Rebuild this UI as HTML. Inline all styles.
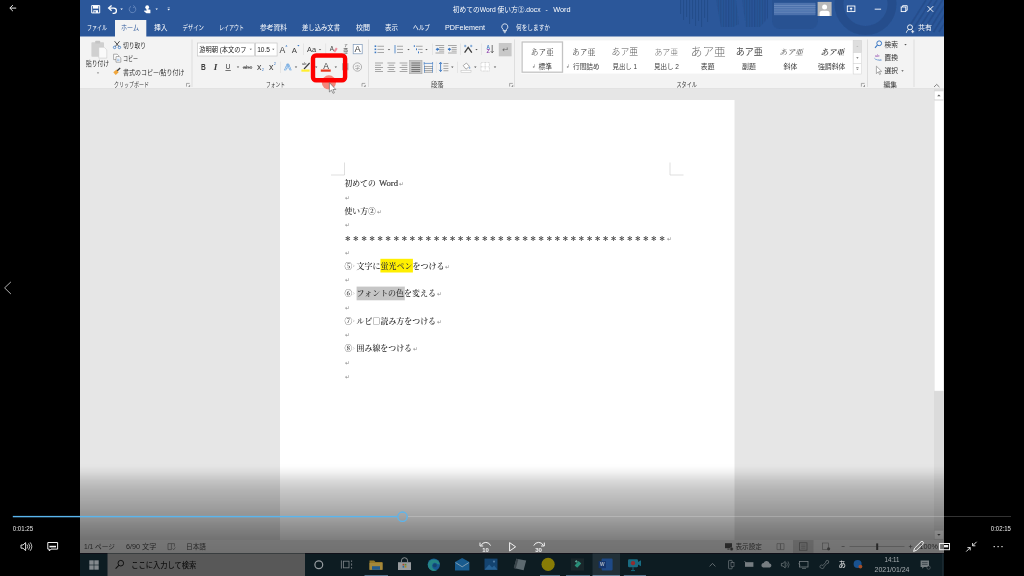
<!DOCTYPE html>
<html lang="ja">
<head>
<meta charset="utf-8">
<title>初めてのWord 使い方②.docx - Word</title>
<style>
html,body{margin:0;padding:0;background:#000;width:1024px;height:576px;overflow:hidden}
svg{display:block;position:absolute;left:0;top:0}
text{font-family:"Liberation Sans", "Noto Sans CJK JP", sans-serif;white-space:pre}
</style>
</head>
<body>
<svg width="1024" height="576" viewBox="0 0 1024 576">
<defs>
<filter id="soft" x="80" y="0" width="864" height="576" filterUnits="userSpaceOnUse"><feGaussianBlur stdDeviation="0.35"/></filter>
<linearGradient id="ov" x1="0" y1="0" x2="0" y2="1">
<stop offset="0.000" stop-color="#000" stop-opacity="0"/>
<stop offset="0.035" stop-color="#000" stop-opacity="0.005"/>
<stop offset="0.088" stop-color="#000" stop-opacity="0.05"/>
<stop offset="0.158" stop-color="#000" stop-opacity="0.14"/>
<stop offset="0.246" stop-color="#000" stop-opacity="0.22"/>
<stop offset="0.377" stop-color="#000" stop-opacity="0.3"/>
<stop offset="0.474" stop-color="#000" stop-opacity="0.36"/>
<stop offset="0.579" stop-color="#000" stop-opacity="0.44"/>
<stop offset="0.684" stop-color="#000" stop-opacity="0.51"/>
<stop offset="0.798" stop-color="#000" stop-opacity="0.53"/>
<stop offset="1.000" stop-color="#000" stop-opacity="0.58"/>
</linearGradient>
</defs>
<rect x="0" y="0" width="1024.00" height="576.00" fill="#000"/>
<rect x="80" y="0" width="864.00" height="37.00" fill="#2b579a"/>
<rect x="80" y="36.5" width="864.00" height="52.50" fill="#f3f3f3"/>
<rect x="80" y="88.2" width="864.00" height="0.80" fill="#dedede"/>
<rect x="80" y="89" width="864.00" height="451.00" fill="#e6e6e6"/>
<rect x="280" y="100" width="454.50" height="440.00" fill="#ffffff"/>
<rect x="934" y="89.2" width="10.00" height="450.80" fill="#dbdbdb"/>
<rect x="80" y="540" width="864.00" height="13.00" fill="#f1f1f1"/>
<rect x="80" y="553" width="864.00" height="23.00" fill="#101a22"/>
<g filter="url(#soft)">
<clipPath id="hdr"><rect x="80" y="0" width="864" height="36.5"/></clipPath>
<pattern id="vh" width="2.6" height="4" patternUnits="userSpaceOnUse"><rect x="0" y="0" width="1.3" height="4" fill="#234a86"/></pattern>
<g clip-path="url(#hdr)">
<rect x="680" y="0" width="1.2" height="14" fill="#234a86" opacity="0.75"/>
<rect x="683" y="0" width="1.2" height="20" fill="#234a86" opacity="0.75"/>
<rect x="686" y="0" width="1.2" height="17" fill="#234a86" opacity="0.75"/>
<rect x="689" y="0" width="1.2" height="24" fill="#234a86" opacity="0.75"/>
<rect x="692" y="0" width="1.2" height="19" fill="#234a86" opacity="0.75"/>
<rect x="695" y="0" width="1.2" height="26" fill="#234a86" opacity="0.75"/>
<rect x="698" y="0" width="1.2" height="21" fill="#234a86" opacity="0.75"/>
<rect x="701" y="0" width="1.2" height="27" fill="#234a86" opacity="0.75"/>
<rect x="704" y="0" width="1.2" height="18" fill="#234a86" opacity="0.75"/>
<rect x="707" y="0" width="1.2" height="22" fill="#234a86" opacity="0.75"/>
<path d="M716 0h20l3 24l-6 3h-12z" fill="url(#vh)" opacity="0.8"/>
<path d="M742 0h26v18l-8 9h-14z" fill="url(#vh)" opacity="0.8"/>
<path d="M772 0h46v21a8 8 0 0 1 -8 8h-30a8 8 0 0 1 -8 -8z" fill="#234a86" opacity="0.4"/>
<circle cx="865.5" cy="4" r="26.5" fill="none" stroke="#234a86" stroke-width="9" opacity="0.7"/>
<g stroke="#234a86" stroke-width="1.6" opacity="0.7">
<line x1="906.0" y1="32" x2="926.0" y2="0"/>
<line x1="911.5" y1="32" x2="931.5" y2="0"/>
<line x1="917.0" y1="32" x2="937.0" y2="0"/>
<line x1="922.5" y1="32" x2="942.5" y2="0"/>
<line x1="928.0" y1="32" x2="948.0" y2="0"/>
<line x1="933.5" y1="32" x2="953.5" y2="0"/>
<line x1="939.0" y1="32" x2="959.0" y2="0"/>
</g></g>
<path d="M91.7 5.6h8v7.3h-8z" fill="none" stroke="#ffffff" stroke-width="1"/><rect x="93" y="5.6" width="5.4" height="3" fill="#ffffff"/><rect x="93.4" y="10.2" width="4.6" height="2.7" fill="#ffffff"/>
<rect x="94.4" y="10.9" width="1.2" height="1.6" fill="#2b579a"/>
<path d="M109.2 8.1h4.6a2.6 2.6 0 0 1 0 5.2h-1.2" fill="none" stroke="#ffffff" stroke-width="1.3"/>
<path d="M111.6 5.4l-3 2.7l3 2.7" fill="none" stroke="#ffffff" stroke-width="1.3"/>
<path d="M120.3 8.4h2.6l-1.3 1.6z" fill="#ffffff"/>
<path d="M134.6 6.8a3.3 3.3 0 1 1 -3.6 -0.4" fill="none" stroke="#6a8bc0" stroke-width="0.9"/>
<path d="M133.3 5.2l1.6 1.6l-2 0.9" fill="none" stroke="#6a8bc0" stroke-width="0.8"/>
<circle cx="147.2" cy="7.2" r="1.9" fill="#ffffff"/>
<path d="M146.4 7v4l-1.6 -0.8l-0.8 1l2.4 2h4v-3.4l-2.6 -0.6v-2.2z" fill="#ffffff"/>
<path d="M155.5 8.5h2.4l-1.2 1.5z" fill="#ffffff"/>
<rect x="167.6" y="7.6" width="2.2" height="0.6" fill="#ffffff"/><path d="M167.5 9h2.4l-1.2 1.5z" fill="#ffffff"/>
<rect x="774" y="2.8" width="41.5" height="12.4" fill="#5a7db5" opacity="0.75"/>
<rect x="774" y="5.2" width="41.5" height="0.7" fill="#8aa5cf" opacity="0.6"/>
<rect x="774" y="7.4" width="41.5" height="0.7" fill="#8aa5cf" opacity="0.6"/>
<rect x="774" y="9.6" width="41.5" height="0.7" fill="#8aa5cf" opacity="0.6"/>
<rect x="774" y="11.8" width="41.5" height="0.7" fill="#8aa5cf" opacity="0.6"/>
<rect x="817.6" y="1.9" width="14" height="14.1" fill="#b9b9b9"/>
<circle cx="824.6" cy="6.9" r="2.5" fill="#fff"/><path d="M819.6 16v-2.6a2.6 2.6 0 0 1 2.6 -2.6h4.8a2.6 2.6 0 0 1 2.6 2.6v2.6z" fill="#fff"/>
<rect x="847.3" y="6" width="7.6" height="5.6" fill="none" stroke="#ffffff" stroke-width="0.9"/>
<path d="M851.1 7.2l1.6 1.7h-1.1v1.6h-1v-1.6h-1.1z" fill="#ffffff"/>
<rect x="874.7" y="8.7" width="6.4" height="0.9" fill="#ffffff"/>
<rect x="901.2" y="7" width="4.6" height="4.6" fill="none" stroke="#ffffff" stroke-width="0.9"/>
<path d="M902.6 7v-1.3h4.6v4.6h-1.4" fill="none" stroke="#ffffff" stroke-width="0.9"/>
<path d="M927.6 6.2l5.6 5.6M933.2 6.2l-5.6 5.6" stroke="#ffffff" stroke-width="1"/>
<circle cx="910" cy="27.3" r="2.5" fill="none" stroke="#ffffff" stroke-width="0.9"/>
<path d="M906.3 32.8a3.8 3.8 0 0 1 2.6 -3.4M911.3 29.5a3.6 3.6 0 0 1 1.6 1.2M912.7 30.2v3M911.2 31.7h3" fill="none" stroke="#ffffff" stroke-width="0.8"/>
<path d="M504.8 23.8a3 3 0 0 1 1.7 5.5v1.3h-3.4v-1.3a3 3 0 0 1 1.7 -5.5z" fill="none" stroke="#ffffff" stroke-width="0.8"/>
<path d="M503.5 31.6h2.6M503.9 32.7h1.8" stroke="#ffffff" stroke-width="0.7"/>
<text x="452.80" y="12.08" font-size="6.9" fill="#ffffff" textLength="87.80" lengthAdjust="spacingAndGlyphs">初めてのWord 使い方②.docx</text>
<text x="545.40" y="12.08" font-size="6.9" fill="#ffffff" textLength="2.20" lengthAdjust="spacingAndGlyphs">-</text>
<text x="553.20" y="12.08" font-size="6.9" fill="#ffffff" textLength="17.40" lengthAdjust="spacingAndGlyphs">Word</text>
<rect x="115" y="20" width="31.30" height="17.00" fill="#f3f3f3"/>
<text x="87.00" y="30.38" font-size="6.9" fill="#ffffff" textLength="20.00" lengthAdjust="spacingAndGlyphs">ファイル</text>
<text x="154.00" y="30.38" font-size="6.9" fill="#ffffff" textLength="13.50" lengthAdjust="spacingAndGlyphs">挿入</text>
<text x="182.50" y="30.38" font-size="6.9" fill="#ffffff" textLength="21.50" lengthAdjust="spacingAndGlyphs">デザイン</text>
<text x="219.00" y="30.38" font-size="6.9" fill="#ffffff" textLength="25.00" lengthAdjust="spacingAndGlyphs">レイアウト</text>
<text x="260.00" y="30.38" font-size="6.9" fill="#ffffff" textLength="27.00" lengthAdjust="spacingAndGlyphs">参考資料</text>
<text x="302.00" y="30.38" font-size="6.9" fill="#ffffff" textLength="38.00" lengthAdjust="spacingAndGlyphs">差し込み文書</text>
<text x="356.00" y="30.38" font-size="6.9" fill="#ffffff" textLength="14.00" lengthAdjust="spacingAndGlyphs">校閲</text>
<text x="385.00" y="30.38" font-size="6.9" fill="#ffffff" textLength="13.00" lengthAdjust="spacingAndGlyphs">表示</text>
<text x="413.00" y="30.38" font-size="6.9" fill="#ffffff" textLength="17.00" lengthAdjust="spacingAndGlyphs">ヘルプ</text>
<text x="445.00" y="30.38" font-size="6.9" fill="#ffffff" textLength="40.00" lengthAdjust="spacingAndGlyphs">PDFelement</text>
<text x="516.00" y="30.38" font-size="6.9" fill="#ffffff" textLength="34.00" lengthAdjust="spacingAndGlyphs">何をしますか</text>
<text x="121.00" y="30.38" font-size="6.9" fill="#2b579a" textLength="18.00" lengthAdjust="spacingAndGlyphs">ホーム</text>
<text x="918.00" y="30.38" font-size="6.9" fill="#ffffff" textLength="14.00" lengthAdjust="spacingAndGlyphs">共有</text>
<text x="114.00" y="87.41" font-size="6.7" fill="#3c3c3c" textLength="35.00" lengthAdjust="spacingAndGlyphs">クリップボード</text>
<text x="266.00" y="87.41" font-size="6.7" fill="#3c3c3c" textLength="19.00" lengthAdjust="spacingAndGlyphs">フォント</text>
<text x="431.00" y="87.41" font-size="6.7" fill="#3c3c3c" textLength="12.50" lengthAdjust="spacingAndGlyphs">段落</text>
<text x="676.50" y="87.41" font-size="6.7" fill="#3c3c3c" textLength="20.50" lengthAdjust="spacingAndGlyphs">スタイル</text>
<text x="883.50" y="87.41" font-size="6.7" fill="#3c3c3c" textLength="13.50" lengthAdjust="spacingAndGlyphs">編集</text>
<rect x="191.6" y="39.5" width="0.80" height="47.50" fill="#d8d8d8"/>
<rect x="368.1" y="39.5" width="0.80" height="47.50" fill="#d8d8d8"/>
<rect x="514.1" y="39.5" width="0.80" height="47.50" fill="#d8d8d8"/>
<rect x="867.1" y="39.5" width="0.80" height="47.50" fill="#d8d8d8"/>
<rect x="913.6" y="39.5" width="0.80" height="47.50" fill="#d8d8d8"/>
<text x="86.00" y="66.45" font-size="6.8" fill="#2e2e2e" textLength="23.00" lengthAdjust="spacingAndGlyphs">貼り付け</text>
<text x="123.00" y="47.75" font-size="6.8" fill="#2e2e2e" textLength="23.00" lengthAdjust="spacingAndGlyphs">切り取り</text>
<text x="123.00" y="61.45" font-size="6.8" fill="#2e2e2e" textLength="15.00" lengthAdjust="spacingAndGlyphs">コピー</text>
<text x="123.00" y="74.65" font-size="6.8" fill="#2e2e2e" textLength="61.50" lengthAdjust="spacingAndGlyphs">書式のコピー/貼り付け</text>
<rect x="197.5" y="43" width="57" height="13" fill="#fff" stroke="#c6c6c6" stroke-width="0.7"/>
<rect x="255.6" y="43" width="21.5" height="13" fill="#fff" stroke="#c6c6c6" stroke-width="0.7"/>
<text x="199.30" y="52.08" font-size="6.9" fill="#222" textLength="47.30" lengthAdjust="spacingAndGlyphs">游明朝 (本文のフ</text>
<text x="257.20" y="52.08" font-size="6.9" fill="#222" textLength="12.80" lengthAdjust="spacingAndGlyphs">10.5</text>
<rect x="91.4" y="42.2" width="12.6" height="14.6" rx="0.8" fill="#d0d0d0"/>
<rect x="95.2" y="40.8" width="5" height="2.6" rx="0.6" fill="#c4c4c4"/>
<path d="M98.8 47.3h5.4l2.6 2.6v8.2h-8z" fill="#fafafa" stroke="#c9c9c9" stroke-width="0.6"/>
<path d="M96.90 72.55h2.2l-1.10 1.3z" fill="#666"/>
<path d="M114.6 41.2l4.4 5.4M119.6 41.2l-4.4 5.4" stroke="#3c3c3c" stroke-width="0.9" fill="none"/>
<circle cx="114.6" cy="47.4" r="1.25" fill="none" stroke="#3b78c4" stroke-width="0.8"/><circle cx="119.4" cy="47.4" r="1.25" fill="none" stroke="#3b78c4" stroke-width="0.8"/>
<path d="M113.6 54.2h3.6l1.4 1.4v4h-5z" fill="#fff" stroke="#777" stroke-width="0.6"/>
<path d="M116 56.6h3.4l1.4 1.4v4.2h-4.8z" fill="#fff" stroke="#777" stroke-width="0.6"/>
<path d="M117 59.2h2.6M117 60.6h2.6" stroke="#3b78c4" stroke-width="0.45"/>
<path d="M113.3 72.2l3.2 -2.6l2.2 2.6l-3 2.8z" fill="#f0a63c"/>
<path d="M117.2 70.8l3 -2.8" stroke="#3c3c3c" stroke-width="1.3"/>
<path d="M249.65 48.65h2.3l-1.15 1.3z" fill="#555"/>
<path d="M272.15 48.65h2.3l-1.15 1.3z" fill="#555"/>
<text x="279.40" y="52.51" font-size="9.2" fill="#3c3c3c" textLength="5.80" lengthAdjust="spacingAndGlyphs">A</text>
<path d="M285.3 46.6h2.2l-1.1 -1.5z" fill="#3b78c4"/>
<text x="291.80" y="52.81" font-size="7.8" fill="#3c3c3c" textLength="5.20" lengthAdjust="spacingAndGlyphs">A</text>
<path d="M297.3 45h2.2l-1.1 1.5z" fill="#3b78c4"/>
<rect x="303" y="43.5" width="0.60" height="11.50" fill="#dcdcdc"/>
<text x="307.00" y="52.28" font-size="8" fill="#3c3c3c" textLength="9.00" lengthAdjust="spacingAndGlyphs">Aa</text>
<path d="M318.80 48.90h2.4l-1.20 1.4z" fill="#555"/>
<rect x="325.5" y="43.5" width="0.60" height="11.50" fill="#dcdcdc"/>
<text x="329.80" y="50.58" font-size="6.6" fill="#3c3c3c" textLength="4.20" lengthAdjust="spacingAndGlyphs">A</text>
<path d="M333.4 51.2l2.6 -3.6l1.7 1.2l-2.6 3.6z" fill="#ee8f9d"/>
<text x="344.20" y="46.70" font-size="3.6" fill="#3c3c3c" textLength="3.40" lengthAdjust="spacingAndGlyphs">ア</text>
<text x="343.20" y="52.54" font-size="5.4" fill="#3c3c3c" textLength="4.80" lengthAdjust="spacingAndGlyphs">亜</text>
<rect x="353.2" y="44.4" width="9" height="9.4" fill="#fff" stroke="#7d98b8" stroke-width="0.7"/>
<text x="354.60" y="52.40" font-size="8.6" fill="#3c3c3c" textLength="6.20" lengthAdjust="spacingAndGlyphs">A</text>
<text x="201.00" y="69.82" font-size="8.4" fill="#3c3c3c" textLength="4.80" lengthAdjust="spacingAndGlyphs" font-weight="700">B</text>
<text x="213.80" y="69.82" font-size="8.4" fill="#3c3c3c" textLength="3.60" lengthAdjust="spacingAndGlyphs" style='font-family:"Liberation Serif", serif' font-style="italic" font-weight="700">I</text>
<text x="225.60" y="69.38" font-size="8" fill="#3c3c3c" textLength="5.00" lengthAdjust="spacingAndGlyphs">U</text>
<rect x="225.4" y="70.2" width="5.40" height="0.70" fill="#3c3c3c"/>
<path d="M236.80 66.50h2.4l-1.20 1.4z" fill="#555"/>
<text x="243.00" y="68.89" font-size="5.8" fill="#3c3c3c" textLength="9.00" lengthAdjust="spacingAndGlyphs">abc</text>
<rect x="242.6" y="67" width="9.80" height="0.50" fill="#3c3c3c"/>
<text x="257.00" y="69.55" font-size="8.2" fill="#3c3c3c" textLength="4.40" lengthAdjust="spacingAndGlyphs">x</text>
<text x="261.80" y="70.90" font-size="3.6" fill="#3b78c4" textLength="2.20" lengthAdjust="spacingAndGlyphs">2</text>
<text x="269.00" y="69.55" font-size="8.2" fill="#3c3c3c" textLength="4.40" lengthAdjust="spacingAndGlyphs">x</text>
<text x="273.80" y="64.90" font-size="3.6" fill="#3b78c4" textLength="2.20" lengthAdjust="spacingAndGlyphs">2</text>
<rect x="280.2" y="61.6" width="0.60" height="11.40" fill="#dcdcdc"/>
<text x="284.2" y="70" font-size="9" textLength="7.2" lengthAdjust="spacingAndGlyphs" fill="#f3f8fd" stroke="#5b9bdc" stroke-width="0.55" font-weight="700">A</text>
<path d="M294.80 66.50h2.4l-1.20 1.4z" fill="#555"/>
<text x="302.00" y="65.38" font-size="4.4" fill="#3c3c3c" textLength="4.40" lengthAdjust="spacingAndGlyphs">ab</text>
<path d="M304 69l5.6 -6" stroke="#3c3c3c" stroke-width="1.1"/>
<rect x="301.4" y="69.5" width="8.20" height="2.20" fill="#ffee2e"/>
<path d="M315.00 66.50h2.4l-1.20 1.4z" fill="#555"/>
<text x="323.20" y="68.72" font-size="8.4" fill="#3c3c3c" textLength="5.70" lengthAdjust="spacingAndGlyphs">A</text>
<rect x="320.8" y="69.5" width="9.90" height="2.20" fill="#e8361c"/>
<path d="M334.60 66.50h2.4l-1.20 1.4z" fill="#555"/>
<rect x="342" y="63.2" width="6.50" height="7.10" fill="#b5b5b5"/>
<text x="343.00" y="69.32" font-size="7" fill="#8a8a8a" textLength="4.60" lengthAdjust="spacingAndGlyphs">A</text>
<circle cx="357.4" cy="67" r="4.2" fill="none" stroke="#8a8a8a" stroke-width="0.6"/>
<text x="354.90" y="68.80" font-size="5" fill="#8a8a8a" textLength="5.00" lengthAdjust="spacingAndGlyphs">字</text>
<path d="M186.5 86.60000000000001v-3.2h3.2" fill="none" stroke="#777" stroke-width="0.6"/>
<path d="M188.1 86.80000000000001h2v-2z" fill="#777"/>
<path d="M362 86.60000000000001v-3.2h3.2" fill="none" stroke="#777" stroke-width="0.6"/>
<path d="M363.6 86.80000000000001h2v-2z" fill="#777"/>
<path d="M509.6 86.60000000000001v-3.2h3.2" fill="none" stroke="#777" stroke-width="0.6"/>
<path d="M511.20000000000005 86.80000000000001h2v-2z" fill="#777"/>
<path d="M861.4 86.60000000000001v-3.2h3.2" fill="none" stroke="#777" stroke-width="0.6"/>
<path d="M863.0 86.80000000000001h2v-2z" fill="#777"/>
<rect x="374.6" y="45.400000000000006" width="1.6" height="1.6" fill="#3b78c4"/>
<rect x="374.6" y="48.5" width="1.6" height="1.6" fill="#3b78c4"/>
<rect x="374.6" y="51.6" width="1.6" height="1.6" fill="#3b78c4"/>
<rect x="377.40" y="45.80" width="6.60" height="0.8" fill="#949494"/>
<rect x="377.40" y="48.90" width="6.60" height="0.8" fill="#949494"/>
<rect x="377.40" y="52.00" width="6.60" height="0.8" fill="#949494"/>
<path d="M387.80 48.90h2.4l-1.20 1.4z" fill="#555"/>
<rect x="394.6" y="45" width="0.8" height="8.4" fill="#3b78c4"/>
<rect x="397.00" y="45.80" width="6.00" height="0.8" fill="#949494"/>
<rect x="397.00" y="48.90" width="6.00" height="0.8" fill="#949494"/>
<rect x="397.00" y="52.00" width="6.00" height="0.8" fill="#949494"/>
<path d="M407.30 48.90h2.4l-1.20 1.4z" fill="#555"/>
<rect x="413.8" y="45.2" width="1" height="1.8" fill="#3b78c4"/><rect x="416" y="48.4" width="1" height="1.8" fill="#3b78c4"/><rect x="418" y="51.5" width="1" height="1.8" fill="#3b78c4"/>
<rect x="416.00" y="45.80" width="6.60" height="0.8" fill="#949494"/>
<rect x="418.20" y="48.90" width="4.40" height="0.8" fill="#949494"/>
<rect x="420.20" y="52.00" width="2.40" height="0.8" fill="#949494"/>
<path d="M425.30 48.90h2.4l-1.20 1.4z" fill="#555"/>
<rect x="432.1" y="43.5" width="0.60" height="11.50" fill="#dcdcdc"/>
<rect x="435.50" y="45.20" width="8.70" height="0.8" fill="#949494"/>
<rect x="435.50" y="52.60" width="8.70" height="0.8" fill="#949494"/>
<rect x="439.10" y="47.10" width="5.10" height="0.8" fill="#949494"/>
<rect x="439.10" y="48.90" width="5.10" height="0.8" fill="#949494"/>
<rect x="439.10" y="50.70" width="5.10" height="0.8" fill="#949494"/>
<rect x="448.00" y="45.20" width="8.70" height="0.8" fill="#949494"/>
<rect x="448.00" y="52.60" width="8.70" height="0.8" fill="#949494"/>
<rect x="451.60" y="47.10" width="5.10" height="0.8" fill="#949494"/>
<rect x="451.60" y="48.90" width="5.10" height="0.8" fill="#949494"/>
<rect x="451.60" y="50.70" width="5.10" height="0.8" fill="#949494"/>
<path d="M435.6 49.3l2.2 -1.9v1.2h1.3v1.4h-1.3v1.2z" fill="#3b78c4"/>
<path d="M451.2 49.3l-2.2 -1.9v1.2h-1.1v1.4h1.1v1.2z" fill="#3b78c4"/>
<rect x="460.1" y="43.5" width="0.60" height="11.50" fill="#dcdcdc"/>
<path d="M464.6 52.6l3.6 -5.2l3.6 5.2" fill="none" stroke="#3c3c3c" stroke-width="1.3"/>
<path d="M464 46h2.4M465.2 44.8v2.4M470 46h2.4M471.2 44.8v2.4" stroke="#3b78c4" stroke-width="0.6"/>
<path d="M475.30 48.90h2.4l-1.20 1.4z" fill="#555"/>
<rect x="481.2" y="43.5" width="0.60" height="11.50" fill="#dcdcdc"/>
<text x="486.40" y="48.53" font-size="4.8" fill="#3b78c4" textLength="3.40" lengthAdjust="spacingAndGlyphs" font-weight="700">A</text>
<text x="486.40" y="53.33" font-size="4.8" fill="#8e44ad" textLength="3.40" lengthAdjust="spacingAndGlyphs" font-weight="700">Z</text>
<path d="M492.2 45v7.6M490.8 51.2l1.4 1.6l1.4 -1.6" fill="none" stroke="#3c3c3c" stroke-width="0.7"/>
<rect x="498.8" y="43" width="12.80" height="13.30" fill="#c8c8c8"/>
<text x="501.60" y="52.12" font-size="7" fill="#666" textLength="7.20" lengthAdjust="spacingAndGlyphs">↵</text>
<rect x="375.00" y="62.60" width="8.00" height="0.8" fill="#949494"/>
<rect x="375.00" y="67.00" width="8.00" height="0.8" fill="#949494"/>
<rect x="375.00" y="71.00" width="8.00" height="0.8" fill="#949494"/>
<rect x="375.00" y="64.80" width="6.00" height="0.8" fill="#949494"/>
<rect x="375.00" y="69.20" width="6.00" height="0.8" fill="#949494"/>
<rect x="387.40" y="62.60" width="7.90" height="0.8" fill="#949494"/>
<rect x="387.40" y="67.00" width="7.90" height="0.8" fill="#949494"/>
<rect x="387.40" y="71.00" width="7.90" height="0.8" fill="#949494"/>
<rect x="388.60" y="64.80" width="5.50" height="0.8" fill="#949494"/>
<rect x="388.60" y="69.20" width="5.50" height="0.8" fill="#949494"/>
<rect x="399.60" y="62.60" width="7.80" height="0.8" fill="#949494"/>
<rect x="399.60" y="67.00" width="7.80" height="0.8" fill="#949494"/>
<rect x="399.60" y="71.00" width="7.80" height="0.8" fill="#949494"/>
<rect x="401.60" y="64.80" width="5.80" height="0.8" fill="#949494"/>
<rect x="401.60" y="69.20" width="5.80" height="0.8" fill="#949494"/>
<rect x="409.5" y="60.4" width="12.5" height="13.3" fill="#c8c8c8" stroke="#a9a9a9" stroke-width="0.6"/>
<rect x="411.40" y="62.55" width="8.80" height="0.9" fill="#6a6a6a"/>
<rect x="411.40" y="64.75" width="8.80" height="0.9" fill="#6a6a6a"/>
<rect x="411.40" y="66.95" width="8.80" height="0.9" fill="#6a6a6a"/>
<rect x="411.40" y="69.15" width="8.80" height="0.9" fill="#6a6a6a"/>
<rect x="411.40" y="70.95" width="8.80" height="0.9" fill="#6a6a6a"/>
<rect x="424.00" y="66.00" width="8.80" height="0.8" fill="#949494"/>
<rect x="424.00" y="68.00" width="8.80" height="0.8" fill="#949494"/>
<rect x="424.00" y="70.00" width="8.80" height="0.8" fill="#949494"/>
<rect x="424.00" y="71.80" width="8.80" height="0.8" fill="#949494"/>
<path d="M424.2 63.4h8.4M424.2 62v2.8M432.6 62v2.8" stroke="#3b78c4" stroke-width="0.7" fill="none"/>
<rect x="424" y="65.2" width="0.6" height="7.4" fill="#3b78c4"/><rect x="432.2" y="65.2" width="0.6" height="7.4" fill="#3b78c4"/>
<rect x="435.9" y="61.6" width="0.60" height="11.40" fill="#dcdcdc"/>
<path d="M440.6 62.4v9M439.2 64l1.4 -1.8l1.4 1.8M439.2 69.8l1.4 1.8l1.4 -1.8" fill="none" stroke="#3b78c4" stroke-width="0.9"/>
<rect x="443.40" y="63.20" width="5.00" height="0.8" fill="#949494"/>
<rect x="443.40" y="65.60" width="5.00" height="0.8" fill="#949494"/>
<rect x="443.40" y="68.00" width="5.00" height="0.8" fill="#949494"/>
<rect x="443.40" y="70.40" width="5.00" height="0.8" fill="#949494"/>
<path d="M451.10 66.50h2.4l-1.20 1.4z" fill="#555"/>
<rect x="457.4" y="61.6" width="0.60" height="11.40" fill="#dcdcdc"/>
<path d="M463.2 65.6l3.2 -2.6l3 3.4l-3.4 2.8z" fill="#fff" stroke="#777" stroke-width="0.6"/>
<path d="M469.8 66.6q1 1.6 0 2.4q-1 -0.8 0 -2.4z" fill="#3b78c4"/>
<rect x="461" y="70.4" width="10" height="2.2" fill="#fdfdfd" stroke="#bdbdbd" stroke-width="0.5"/>
<path d="M474.10 66.50h2.4l-1.20 1.4z" fill="#555"/>
<rect x="481" y="62.6" width="8.4" height="8.4" fill="#fff" stroke="#b9b9b9" stroke-width="0.6" stroke-dasharray="0.8 0.6"/>
<path d="M485.2 62.6v8.4M481 66.8h8.4" stroke="#b9b9b9" stroke-width="0.6" stroke-dasharray="0.8 0.6"/>
<path d="M493.80 66.50h2.4l-1.20 1.4z" fill="#555"/>
<rect x="520.7" y="40.4" width="331.80" height="33.20" fill="#ffffff"/>
<rect x="522.1" y="42" width="40.4" height="30.2" fill="#fff" stroke="#c3c3c3" stroke-width="1.3"/>
<text x="530.80" y="54.77" font-size="7.7" fill="#4c4c4c" textLength="23.00" lengthAdjust="spacingAndGlyphs" style='font-family:"Liberation Serif", "Noto Serif CJK JP", "Noto Serif CJK SC", serif'>あア亜</text>
<text x="572.00" y="54.77" font-size="7.7" fill="#4c4c4c" textLength="23.40" lengthAdjust="spacingAndGlyphs" style='font-family:"Liberation Serif", "Noto Serif CJK JP", "Noto Serif CJK SC", serif'>あア亜</text>
<text x="611.60" y="55.20" font-size="8.9" fill="#5a5a5a" textLength="26.60" lengthAdjust="spacingAndGlyphs" style='font-family:"Noto Sans CJK JP", sans-serif' font-weight="300">あア亜</text>
<text x="654.40" y="54.84" font-size="7.9" fill="#6a6a6a" textLength="23.80" lengthAdjust="spacingAndGlyphs" style='font-family:"Noto Sans CJK JP", sans-serif' font-weight="300">あア亜</text>
<text x="690.80" y="55.81" font-size="11.7" fill="#6a6a6a" textLength="35.00" lengthAdjust="spacingAndGlyphs" style='font-family:"Noto Sans CJK JP", sans-serif' font-weight="200">あア亜</text>
<text x="735.80" y="55.24" font-size="9" fill="#444" textLength="27.00" lengthAdjust="spacingAndGlyphs" style='font-family:"Noto Sans CJK JP", sans-serif'>あア亜</text>
<text x="779.30" y="54.84" font-size="7.9" fill="#666" textLength="23.70" lengthAdjust="spacingAndGlyphs" style='font-family:"Liberation Serif", "Noto Serif CJK JP", "Noto Serif CJK SC", serif' font-weight="500" font-style="italic">あア亜</text>
<text x="820.50" y="54.84" font-size="7.9" fill="#555" textLength="23.80" lengthAdjust="spacingAndGlyphs" style='font-family:"Liberation Serif", "Noto Serif CJK JP", "Noto Serif CJK SC", serif' font-weight="700" font-style="italic">あア亜</text>
<text x="531.60" y="68.26" font-size="4.6" fill="#666" textLength="3.40" lengthAdjust="spacingAndGlyphs">↲</text>
<text x="538.60" y="68.61" font-size="6.7" fill="#3a3a3a" textLength="13.40" lengthAdjust="spacingAndGlyphs">標準</text>
<text x="566.20" y="68.26" font-size="4.6" fill="#666" textLength="3.40" lengthAdjust="spacingAndGlyphs">↲</text>
<text x="573.00" y="68.61" font-size="6.7" fill="#3a3a3a" textLength="26.60" lengthAdjust="spacingAndGlyphs">行間詰め</text>
<text x="612.50" y="68.61" font-size="6.7" fill="#3a3a3a" textLength="24.50" lengthAdjust="spacingAndGlyphs">見出し 1</text>
<text x="654.00" y="68.61" font-size="6.7" fill="#3a3a3a" textLength="25.00" lengthAdjust="spacingAndGlyphs">見出し 2</text>
<text x="700.80" y="68.61" font-size="6.7" fill="#3a3a3a" textLength="13.70" lengthAdjust="spacingAndGlyphs">表題</text>
<text x="742.00" y="68.61" font-size="6.7" fill="#3a3a3a" textLength="13.80" lengthAdjust="spacingAndGlyphs">副題</text>
<text x="783.50" y="68.61" font-size="6.7" fill="#3a3a3a" textLength="13.80" lengthAdjust="spacingAndGlyphs">斜体</text>
<text x="818.00" y="68.61" font-size="6.7" fill="#3a3a3a" textLength="27.50" lengthAdjust="spacingAndGlyphs">強調斜体</text>
<rect x="853.2" y="40.4" width="8.4" height="12.1" fill="#dedede" stroke="#d0d0d0" stroke-width="0.5"/>
<rect x="853.2" y="52.5" width="8.4" height="10.9" fill="#fff" stroke="#d0d0d0" stroke-width="0.5"/>
<rect x="853.2" y="63.4" width="8.4" height="10.6" fill="#fff" stroke="#d0d0d0" stroke-width="0.5"/>
<path d="M856.2 47l1.2 -1.3l1.2 1.3z" fill="#bdbdbd"/>
<path d="M856.20 57.30h2.4l-1.20 1.4z" fill="#666"/>
<path d="M856.20 68.70h2.4l-1.20 1.4z" fill="#666"/>
<rect x="856.2" y="67.3" width="2.40" height="0.60" fill="#666"/>
<circle cx="879.2" cy="43.3" r="2.4" fill="none" stroke="#3b78c4" stroke-width="1"/><path d="M877.4 45.2l-2.4 2.6" stroke="#3b78c4" stroke-width="1.2"/>
<text x="884.60" y="47.05" font-size="6.8" fill="#2e2e2e" textLength="13.40" lengthAdjust="spacingAndGlyphs">検索</text>
<path d="M904.30 44.10h2.4l-1.20 1.4z" fill="#555"/>
<text x="875.00" y="57.11" font-size="4.2" fill="#8e44ad" textLength="4.40" lengthAdjust="spacingAndGlyphs">ab</text>
<text x="877.60" y="61.31" font-size="4.2" fill="#3b78c4" textLength="4.40" lengthAdjust="spacingAndGlyphs">ac</text>
<path d="M874.4 58.2q1.4 2 3 1.4" fill="none" stroke="#3b78c4" stroke-width="0.6"/>
<text x="884.60" y="60.25" font-size="6.8" fill="#2e2e2e" textLength="13.40" lengthAdjust="spacingAndGlyphs">置換</text>
<path d="M876.4 66.2v7.4l1.9 -1.8l1.3 2.8l1 -0.5l-1.3 -2.7h2.4z" fill="#fff" stroke="#777" stroke-width="0.6"/>
<text x="884.60" y="73.25" font-size="6.8" fill="#2e2e2e" textLength="13.40" lengthAdjust="spacingAndGlyphs">選択</text>
<path d="M901.30 70.30h2.4l-1.20 1.4z" fill="#555"/>
<path d="M934 87l2.7 -2.6l2.7 2.6" fill="none" stroke="#666" stroke-width="0.8"/>
<rect x="934.2" y="91" width="9.4" height="8.8" fill="#fff" stroke="#d4d4d4" stroke-width="0.5"/>
<path d="M937.2 96.2l1.7 -1.8l1.7 1.8z" fill="#555"/>
<rect x="934.2" y="100.4" width="9.5" height="290.6" fill="#fff" stroke="#dedede" stroke-width="0.4"/>
<rect x="934.2" y="530.2" width="9.4" height="9" fill="#fff" stroke="#d4d4d4" stroke-width="0.5"/>
<path d="M937.2 534l1.7 1.8l1.7 -1.8z" fill="#555"/>
<circle cx="328.9" cy="82.4" r="7.1" fill="#f5867a"/>
<rect x="313" y="55.5" width="32.1" height="24.7" rx="3" ry="3" fill="none" stroke="#fe0000" stroke-width="4.4"/>
<path d="M329.4 82.6v9.4l2.1 -2l1.5 3.3l1.4 -0.6l-1.5 -3.2h2.9z" fill="#fff" stroke="#555" stroke-width="0.6" stroke-linejoin="round"/>
<path d="M344.5 162.5v12.5h-13.5M670 162.5v12.5h13.5" fill="none" stroke="#c9c9c9" stroke-width="0.6"/>
<rect x="380.4" y="258.8" width="32.50" height="13.70" fill="#ffef00"/>
<rect x="356.6" y="286.6" width="48.20" height="13.70" fill="#c6c6c6"/>
<text x="344.50" y="186.25" font-size="7.93" fill="#383838" textLength="31.30" lengthAdjust="spacingAndGlyphs" style='font-family:"Liberation Serif", "Noto Serif CJK JP", "Noto Serif CJK SC", serif' font-weight="600">初めての</text>
<text x="379.00" y="186.25" font-size="7.93" fill="#383838" textLength="19.00" lengthAdjust="spacingAndGlyphs" style='font-family:"Liberation Serif", "Noto Serif CJK JP", "Noto Serif CJK SC", serif' stroke="#383838" stroke-width="0.15">Word</text>
<text x="398.90" y="186.06" font-size="6" fill="#8a8a8a" textLength="4.90" lengthAdjust="spacingAndGlyphs">↵</text>
<text x="344.90" y="199.81" font-size="6" fill="#8a8a8a" textLength="4.90" lengthAdjust="spacingAndGlyphs">↵</text>
<text x="344.50" y="213.75" font-size="7.93" fill="#383838" textLength="31.30" lengthAdjust="spacingAndGlyphs" style='font-family:"Liberation Serif", "Noto Serif CJK JP", "Noto Serif CJK SC", serif' font-weight="600">使い方②</text>
<text x="376.70" y="213.56" font-size="6" fill="#8a8a8a" textLength="4.90" lengthAdjust="spacingAndGlyphs">↵</text>
<text x="344.90" y="227.31" font-size="6" fill="#8a8a8a" textLength="4.90" lengthAdjust="spacingAndGlyphs">↵</text>
<text x="344.80" y="239.83" font-size="6.2" fill="#484848" textLength="320.30" lengthAdjust="spacing" style='font-family:"Noto Serif CJK JP", "Noto Serif CJK SC", serif' font-weight="900" stroke="#484848" stroke-width="0.2">＊＊＊＊＊＊＊＊＊＊＊＊＊＊＊＊＊＊＊＊＊＊＊＊＊＊＊＊＊＊＊＊＊＊＊＊＊＊＊＊</text>
<text x="666.50" y="241.06" font-size="6" fill="#8a8a8a" textLength="4.90" lengthAdjust="spacingAndGlyphs">↵</text>
<text x="344.90" y="254.81" font-size="6" fill="#8a8a8a" textLength="4.90" lengthAdjust="spacingAndGlyphs">↵</text>
<text x="344.50" y="268.75" font-size="7.93" fill="#383838" textLength="7.70" lengthAdjust="spacingAndGlyphs" style='font-family:"Liberation Serif", "Noto Serif CJK JP", "Noto Serif CJK SC", serif' font-weight="600">⑤</text>
<text x="356.60" y="268.75" font-size="7.93" fill="#383838" textLength="87.80" lengthAdjust="spacingAndGlyphs" style='font-family:"Liberation Serif", "Noto Serif CJK JP", "Noto Serif CJK SC", serif' font-weight="600">文字に蛍光ペンをつける</text>
<text x="445.30" y="268.56" font-size="6" fill="#8a8a8a" textLength="4.90" lengthAdjust="spacingAndGlyphs">↵</text>
<text x="344.90" y="282.31" font-size="6" fill="#8a8a8a" textLength="4.90" lengthAdjust="spacingAndGlyphs">↵</text>
<text x="344.50" y="296.25" font-size="7.93" fill="#383838" textLength="7.70" lengthAdjust="spacingAndGlyphs" style='font-family:"Liberation Serif", "Noto Serif CJK JP", "Noto Serif CJK SC", serif' font-weight="600">⑥</text>
<text x="356.60" y="296.25" font-size="7.93" fill="#383838" textLength="79.40" lengthAdjust="spacingAndGlyphs" style='font-family:"Liberation Serif", "Noto Serif CJK JP", "Noto Serif CJK SC", serif' font-weight="600">フォントの色を変える</text>
<text x="437.10" y="296.06" font-size="6" fill="#8a8a8a" textLength="4.90" lengthAdjust="spacingAndGlyphs">↵</text>
<text x="344.90" y="309.81" font-size="6" fill="#8a8a8a" textLength="4.90" lengthAdjust="spacingAndGlyphs">↵</text>
<text x="344.50" y="323.75" font-size="7.93" fill="#383838" textLength="7.70" lengthAdjust="spacingAndGlyphs" style='font-family:"Liberation Serif", "Noto Serif CJK JP", "Noto Serif CJK SC", serif' font-weight="600">⑦</text>
<text x="356.60" y="323.75" font-size="7.93" fill="#383838" textLength="15.80" lengthAdjust="spacingAndGlyphs" style='font-family:"Liberation Serif", "Noto Serif CJK JP", "Noto Serif CJK SC", serif' font-weight="600">ルビ</text>
<text x="372.60" y="323.75" font-size="7.93" fill="#383838" textLength="7.60" lengthAdjust="spacingAndGlyphs" style='font-family:"Noto Serif CJK JP", "Noto Serif CJK SC", serif'>□</text>
<text x="380.50" y="323.75" font-size="7.93" fill="#383838" textLength="55.50" lengthAdjust="spacingAndGlyphs" style='font-family:"Liberation Serif", "Noto Serif CJK JP", "Noto Serif CJK SC", serif' font-weight="600">読み方をつける</text>
<text x="437.10" y="323.56" font-size="6" fill="#8a8a8a" textLength="4.90" lengthAdjust="spacingAndGlyphs">↵</text>
<text x="344.90" y="337.31" font-size="6" fill="#8a8a8a" textLength="4.90" lengthAdjust="spacingAndGlyphs">↵</text>
<text x="344.50" y="351.25" font-size="7.93" fill="#383838" textLength="7.70" lengthAdjust="spacingAndGlyphs" style='font-family:"Liberation Serif", "Noto Serif CJK JP", "Noto Serif CJK SC", serif' font-weight="600">⑧</text>
<text x="356.60" y="351.25" font-size="7.93" fill="#383838" textLength="55.40" lengthAdjust="spacingAndGlyphs" style='font-family:"Liberation Serif", "Noto Serif CJK JP", "Noto Serif CJK SC", serif' font-weight="600">囲み線をつける</text>
<text x="413.10" y="351.06" font-size="6" fill="#8a8a8a" textLength="4.90" lengthAdjust="spacingAndGlyphs">↵</text>
<text x="344.90" y="364.81" font-size="6" fill="#8a8a8a" textLength="4.90" lengthAdjust="spacingAndGlyphs">↵</text>
<text x="344.90" y="378.56" font-size="6" fill="#8a8a8a" textLength="4.90" lengthAdjust="spacingAndGlyphs">↵</text>
<path d="M353 264.7l1.2 1.2l-1.2 1.2" fill="none" stroke="#8a8a8a" stroke-width="0.4"/>
<path d="M353 292.2l1.2 1.2l-1.2 1.2" fill="none" stroke="#8a8a8a" stroke-width="0.4"/>
<path d="M353 319.7l1.2 1.2l-1.2 1.2" fill="none" stroke="#8a8a8a" stroke-width="0.4"/>
<path d="M353 347.2l1.2 1.2l-1.2 1.2" fill="none" stroke="#8a8a8a" stroke-width="0.4"/>
<text x="84.00" y="549.08" font-size="6.6" fill="#4f4f4f" textLength="31.00" lengthAdjust="spacingAndGlyphs">1/1 ページ</text>
<text x="126.00" y="549.08" font-size="6.6" fill="#4f4f4f" textLength="30.50" lengthAdjust="spacingAndGlyphs">6/90 文字</text>
<path d="M168 543.6h3.4v6h-3.4zM171.4 543.6h3v3" fill="none" stroke="#666" stroke-width="0.6"/>
<path d="M172.6 548.6l1.1 1.1l1.6 -2.2" fill="none" stroke="#666" stroke-width="0.6"/>
<text x="186.00" y="549.08" font-size="6.6" fill="#4f4f4f" textLength="20.00" lengthAdjust="spacingAndGlyphs">日本語</text>
<rect x="725" y="543.2" width="7" height="5" fill="#555"/><rect x="727.4" y="548.6" width="2.2" height="1" fill="#555"/><circle cx="731.6" cy="549" r="1.7" fill="#555" stroke="#f1f1f1" stroke-width="0.4"/>
<text x="735.50" y="549.08" font-size="6.6" fill="#4f4f4f" textLength="26.50" lengthAdjust="spacingAndGlyphs">表示設定</text>
<path d="M777 543.6h3.4v6h-3.4zM780.6 543.6h3.4v6h-3.4z" fill="none" stroke="#8e8e8e" stroke-width="0.6"/>
<rect x="793" y="540" width="20.50" height="13.00" fill="#d2d2d2"/>
<rect x="799.6" y="542.8" width="7.4" height="7.4" fill="none" stroke="#7d7d7d" stroke-width="0.7"/><path d="M801.2 545h4.2M801.2 546.6h4.2M801.2 548.2h4.2" stroke="#8a8a8a" stroke-width="0.5"/>
<rect x="822.4" y="543" width="6" height="6.6" fill="none" stroke="#8e8e8e" stroke-width="0.6"/><circle cx="828.6" cy="548.8" r="1.6" fill="#777"/>
<rect x="841.6" y="546.3" width="3.00" height="0.60" fill="#666"/>
<rect x="849.5" y="546.4" width="55.00" height="0.50" fill="#8a8a8a"/>
<rect x="876.2" y="543.4" width="2.00" height="6.60" fill="#555"/>
<rect x="908.8" y="546.3" width="3.60" height="0.60" fill="#666"/>
<rect x="910.3" y="544.8" width="0.60" height="3.60" fill="#666"/>
<text x="919.50" y="549.08" font-size="6.6" fill="#4f4f4f" textLength="18.50" lengthAdjust="spacingAndGlyphs">100%</text>
</g>
<rect x="80" y="462" width="864" height="114" fill="url(#ov)"/>
<g filter="url(#soft)">
<rect x="80" y="553.4" width="864.00" height="22.60" fill="#0f1a22"/>
<rect x="107.5" y="553.4" width="197.50" height="22.60" fill="#595959"/>
</g>
<g filter="url(#soft)" opacity="0.82">
<rect x="89.3" y="560.3" width="4.4" height="4.4" fill="#9da2a5"/>
<rect x="94.3" y="560.3" width="4.4" height="4.4" fill="#9da2a5"/>
<rect x="89.3" y="565.3" width="4.4" height="4.4" fill="#9da2a5"/>
<rect x="94.3" y="565.3" width="4.4" height="4.4" fill="#9da2a5"/>
<circle cx="120.8" cy="563.2" r="2.8" fill="none" stroke="#000" stroke-width="1"/><path d="M118.8 565.3l-3.2 3.3" stroke="#000" stroke-width="1.1"/>
<text x="131.30" y="568.14" font-size="7.6" fill="#000" textLength="65.00" lengthAdjust="spacingAndGlyphs" font-weight="500">ここに入力して検索</text>
<circle cx="318.8" cy="564.7" r="3.9" fill="none" stroke="#b7babd" stroke-width="1.2"/>
<rect x="343.4" y="561.2" width="5.6" height="6.6" fill="none" stroke="#8d9296" stroke-width="0.9"/><path d="M341.4 560.4v8.2M351.6 560.4v1.6M351.6 563.4v2.2M351.6 567v1.6" stroke="#8d9296" stroke-width="0.9"/>
<path d="M369.5 560.6h4.6l1.4 1.4h7v7.8h-13z" fill="#b08a2c"/><path d="M369.5 563h13v6.8h-13z" fill="#c7a040"/><rect x="372" y="566.2" width="8" height="3.6" fill="#2a6aa5"/>
<rect x="364.5" y="575" width="23.50" height="1.00" fill="#6688a3"/>
<path d="M398 562.2h13v7.8h-13z" fill="#b6b8ba"/><path d="M401.4 562.2v-1.4a3.1 3.1 0 0 1 6.2 0v1.4" fill="none" stroke="#b6b8ba" stroke-width="0.9"/>
<rect x="402.6" y="563.8" width="1.7" height="1.7" fill="#d8512c"/><rect x="404.7" y="563.8" width="1.7" height="1.7" fill="#6da63a"/><rect x="402.6" y="565.9" width="1.7" height="1.7" fill="#2d7ec0"/><rect x="404.7" y="565.9" width="1.7" height="1.7" fill="#d9a422"/>
<circle cx="433.8" cy="564.6" r="6.2" fill="#1a66aa"/><path d="M428 566.6a6.2 6.2 0 0 0 9.6 3.2a4.6 4.6 0 0 1 -5.6 -4.4a3 3 0 0 1 5.6 -1.2h2.3a6.2 6.2 0 0 0 -11.9 -0.6z" fill="#2fa89a" opacity="0.85"/><circle cx="434.8" cy="565.4" r="1.9" fill="#15507f"/>
<path d="M455 562l7.2 -4l7.2 4v8.4h-14.4z" fill="#1a69a6"/><path d="M455.6 562.6l6.6 4.2l6.6 -4.2" fill="none" stroke="#a9c3d8" stroke-width="0.9"/>
<rect x="484.5" y="558.6" width="13" height="11.2" fill="#184d82"/><path d="M484.5 569.8l4.6 -5.4l3 3l2 -1.8l3.4 4.2z" fill="#2f72ad"/><circle cx="494" cy="561.6" r="1.1" fill="#5f96c3"/>
<path d="M516.4 558.8l9.8 1.8l-2.6 9.6l-9.8 -2.2z" fill="#6e7a80"/><path d="M516.4 558.8l2 0.4l-2.6 9.2l-2 -0.4z" fill="#434d52"/>
<circle cx="548.1" cy="564.3" r="6.6" fill="#a39200"/>
<rect x="540" y="575" width="20.00" height="1.00" fill="#6688a3"/>
<rect x="571" y="558.4" width="13" height="12.2" fill="#1d2a2e"/><path d="M574.6 565.4l4 -4.4l2.6 2.4l-4 4.4z" fill="#2fa88c"/><path d="M574.8 561.4l1.6 -1.4l1.4 1.4l-1.6 1.4z" fill="#6cc0ad"/>
<rect x="566" y="575" width="24.00" height="1.00" fill="#6688a3"/>
<rect x="592.5" y="553.4" width="27.50" height="22.60" fill="#27343d"/>
<rect x="601.6" y="558.6" width="11" height="11.8" rx="0.8" fill="#23539c"/><rect x="598.6" y="561" width="7.4" height="7.2" fill="#153b7e"/>
<text x="600.00" y="566.40" font-size="5" fill="#cfd8e6" textLength="4.60" lengthAdjust="spacingAndGlyphs" font-weight="700">W</text>
<rect x="592.5" y="575" width="27.50" height="1.00" fill="#7c9db8"/>
<rect x="628" y="559.2" width="10" height="8" rx="1.2" fill="#1b7d97"/><path d="M638 562l3 -1.8v6l-3 -1.8z" fill="#1b7d97"/><circle cx="633" cy="563.2" r="2.1" fill="#b03030"/><path d="M631 570.6h4M633 567.2v3.4" stroke="#1b7d97" stroke-width="0.9"/>
<rect x="623.8" y="575" width="22.20" height="1.00" fill="#6688a3"/>
<path d="M709.6 566.4l2.9 -3l2.9 3" fill="none" stroke="#8d9397" stroke-width="0.8"/>
<rect x="728.6" y="560.4" width="3.6" height="8.4" rx="0.6" fill="none" stroke="#8d9397" stroke-width="0.7"/><rect x="731" y="562.6" width="3" height="4" fill="#0f1a22" stroke="#8d9397" stroke-width="0.6"/>
<rect x="745" y="562.2" width="8.4" height="4.6" fill="#8d9397"/><path d="M744.4 561.4l2 1.4" stroke="#8d9397" stroke-width="0.8"/>
<path d="M763 567.4a2.3 2.3 0 0 1 0.6 -4.5a3.2 3.2 0 0 1 6 0.6a2 2 0 0 1 0.4 3.9z" fill="#8d9397"/>
<path d="M781.4 563.4h1.6l2.2 -2v6.6l-2.2 -2h-1.6z" fill="none" stroke="#8d9397" stroke-width="0.7"/><path d="M786.6 562.6q1.4 2 0 4M788 561.4q2.2 3.2 0 6.4" fill="none" stroke="#8d9397" stroke-width="0.6"/>
<rect x="799.6" y="561.4" width="8.4" height="5.6" fill="none" stroke="#8d9397" stroke-width="0.8"/><path d="M798.4 563.6l2 1.6M802 568.4h4" stroke="#8d9397" stroke-width="0.7"/>
<path d="M821.4 568.2a1.6 1.6 0 1 1 1.4 -2.6l3 -3.4a1.5 1.5 0 1 1 1.2 1.2l-3 3.4a1.6 1.6 0 0 1 -2.6 1.4z" fill="none" stroke="#8d9397" stroke-width="0.7"/>
<text x="838.40" y="567.34" font-size="7.6" fill="#f0f0f0" textLength="7.40" lengthAdjust="spacingAndGlyphs" font-weight="500">あ</text>
<circle cx="857.6" cy="564" r="4" fill="#1c5ea8"/><circle cx="860.4" cy="566.6" r="1.9" fill="#c75a2a"/>
<text x="884.50" y="561.87" font-size="6.3" fill="#c6cacd" textLength="15.00" lengthAdjust="spacingAndGlyphs">14:11</text>
<text x="874.50" y="572.27" font-size="6.3" fill="#c6cacd" textLength="35.00" lengthAdjust="spacingAndGlyphs">2021/01/24</text>
<path d="M920.6 560.6h8.4v6.4h-5l-1.8 1.8v-1.8h-1.6z" fill="#8d9397"/><path d="M922 562.6h5.6M922 564.4h5.6" stroke="#0f1a22" stroke-width="0.5"/><circle cx="928.6" cy="567.6" r="1.7" fill="#0f1a22" stroke="#8d9397" stroke-width="0.5"/>
<rect x="942.6" y="553.4" width="0.60" height="22.60" fill="#3a444b"/>
</g>
<path d="M16.2 8.1h-6.2M12.9 5.1l-3.1 3l3.1 3" fill="none" stroke="#e6e6e6" stroke-width="1"/>
<path d="M10.9 281.9l-6.3 6l6.3 6.1" fill="none" stroke="#b0b0b0" stroke-width="1"/>
<rect x="408" y="516.2" width="603" height="0.8" fill="#ffffff" opacity="0.25"/>
<rect x="12.8" y="515.9" width="384.6" height="1.4" fill="#5ab5ee"/>
<circle cx="402.5" cy="516.7" r="4.7" fill="none" stroke="#5ab5ee" stroke-width="1.3"/>
<text x="12.80" y="531.10" font-size="6.4" fill="#e8e8e8" textLength="20.30" lengthAdjust="spacingAndGlyphs">0:01:25</text>
<text x="990.80" y="531.10" font-size="6.4" fill="#e8e8e8" textLength="20.00" lengthAdjust="spacingAndGlyphs">0:02:15</text>
<path d="M21 545h2l2.6 -2.4v8l-2.6 -2.4h-2z" fill="none" stroke="#f2f2f2" stroke-width="0.9" stroke-linejoin="round"/>
<path d="M27 544.6q1.4 2 0 4M28.6 543.4q2.4 3.2 0 6.4M30.2 542.4q3.2 4.2 0 8.4" fill="none" stroke="#f2f2f2" stroke-width="0.8"/>
<path d="M47.8 542.5h9.8v6.6h-6.6l-1.7 1.9v-1.9h-1.5z" fill="none" stroke="#f2f2f2" stroke-width="1"/><path d="M49.4 546.6h6.6" stroke="#f2f2f2" stroke-width="1.6"/>
<path d="M481 545.6a5.2 5.2 0 0 1 9.6 0" fill="none" stroke="#f2f2f2" stroke-width="1"/><path d="M480 542.6v3.4h3.2" fill="none" stroke="#f2f2f2" stroke-width="1"/>
<text x="482.30" y="551.53" font-size="6.2" fill="#f2f2f2" textLength="6.60" lengthAdjust="spacingAndGlyphs" font-weight="700">10</text>
<path d="M509.6 542.6v8.4l6 -4.2z" fill="none" stroke="#f2f2f2" stroke-width="1" stroke-linejoin="miter"/>
<path d="M533.8 545.6a5.2 5.2 0 0 1 9.6 0" fill="none" stroke="#f2f2f2" stroke-width="1"/><path d="M544.3 542.6v3.4h-3.2" fill="none" stroke="#f2f2f2" stroke-width="1"/>
<text x="535.20" y="551.53" font-size="6.2" fill="#f2f2f2" textLength="6.80" lengthAdjust="spacingAndGlyphs" font-weight="700">30</text>
<path d="M913.6 551.4l1 -3.2l6.4 -6.4a1.3 1.3 0 0 1 2 2l-6.4 6.4z" fill="none" stroke="#f2f2f2" stroke-width="1" stroke-linejoin="round"/>
<rect x="939.6" y="543.5" width="9.9" height="6.2" fill="none" stroke="#f2f2f2" stroke-width="1"/><rect x="944" y="545" width="4.2" height="2.4" fill="#f2f2f2"/>
<path d="M976.6 541.8l-4 4M972.6 543v2.8h2.8M966.2 551.6l4 -4M970.2 550.4v-2.8h-2.8" fill="none" stroke="#f2f2f2" stroke-width="0.9"/>
<rect x="993.6" y="546" width="1.2" height="1.2" fill="#f2f2f2"/>
<rect x="997.5" y="546" width="1.2" height="1.2" fill="#f2f2f2"/>
<rect x="1001.4" y="546" width="1.2" height="1.2" fill="#f2f2f2"/>
</svg>
</body>
</html>
